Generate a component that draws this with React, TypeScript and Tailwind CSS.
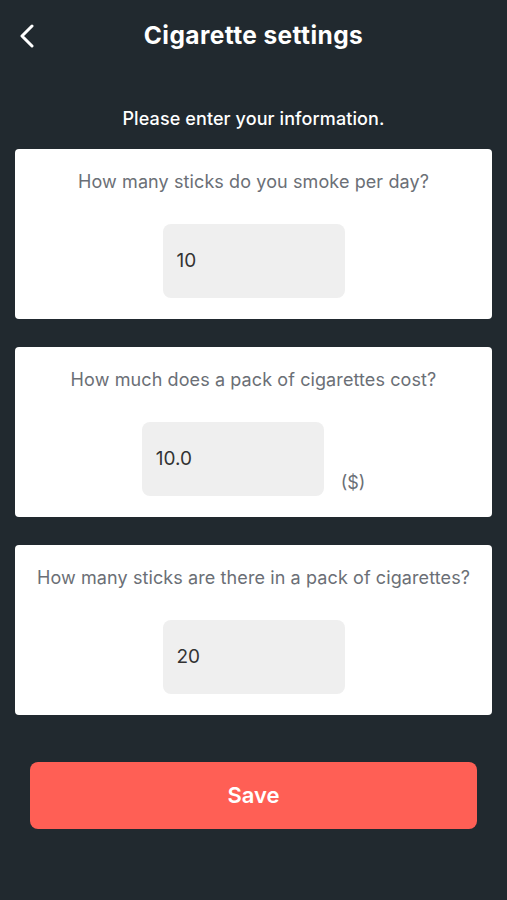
import React from "react";

interface FieldCardProps {
  question: string;
  value: string;
  unit?: string;
}

const FieldCard = ({ question, value, unit }: FieldCardProps) => {
  return (
    <div className="bg-white rounded-[4px] h-[170px] flex flex-col items-center pt-[21px]">
      <p className="text-[18px] leading-[24px] text-[#6b6f76] text-center tracking-[0.1px]">{question}</p>
      <div className="mt-[30px] flex items-end gap-[17px]">
        <div className="w-[182px] h-[74px] bg-[#efefef] rounded-[8px] flex items-center px-[14px]">
          <span className="text-[19px] text-[#333333]">{value}</span>
        </div>
        {unit && <span className="text-[18px] text-[#6b6f76] leading-[24px] mb-[1px]">{unit}</span>}
      </div>
    </div>
  );
};

export default function App() {
  return (
    <div
      className="w-[507px] h-[900px] bg-[#21292f] flex flex-col"
      style={{ fontFamily: "Inter, 'Noto Sans', sans-serif" }}
    >
      <div className="relative h-[70px] flex items-center justify-center">
        <svg
          className="absolute left-[18px] top-[24px]"
          width="20"
          height="24"
          viewBox="0 0 20 24"
          fill="none"
          stroke="white"
          strokeWidth="3"
          strokeLinecap="round"
          strokeLinejoin="round"
        >
          <path d="M14 2 L4 12 L14 22" />
        </svg>
        <h1 className="text-[24.5px] font-bold text-white tracking-[0.4px]">Cigarette settings</h1>
      </div>
      <p className="mt-[37px] text-center text-white text-[18px] font-medium leading-[24px] tracking-[0.1px]">
        Please enter your information.
      </p>
      <div className="mt-[18px] px-[15px] flex flex-col gap-[28px]">
        <FieldCard question="How many sticks do you smoke per day?" value="10" />
        <FieldCard question="How much does a pack of cigarettes cost?" value="10.0" unit="($)" />
        <FieldCard question="How many sticks are there in a pack of cigarettes?" value="20" />
      </div>
      <div className="mt-[47px] px-[30px]">
        <button className="w-full h-[67px] bg-[#ff5f55] rounded-[8px] text-white text-[22px] font-semibold">
          Save
        </button>
      </div>
    </div>
  );
}
